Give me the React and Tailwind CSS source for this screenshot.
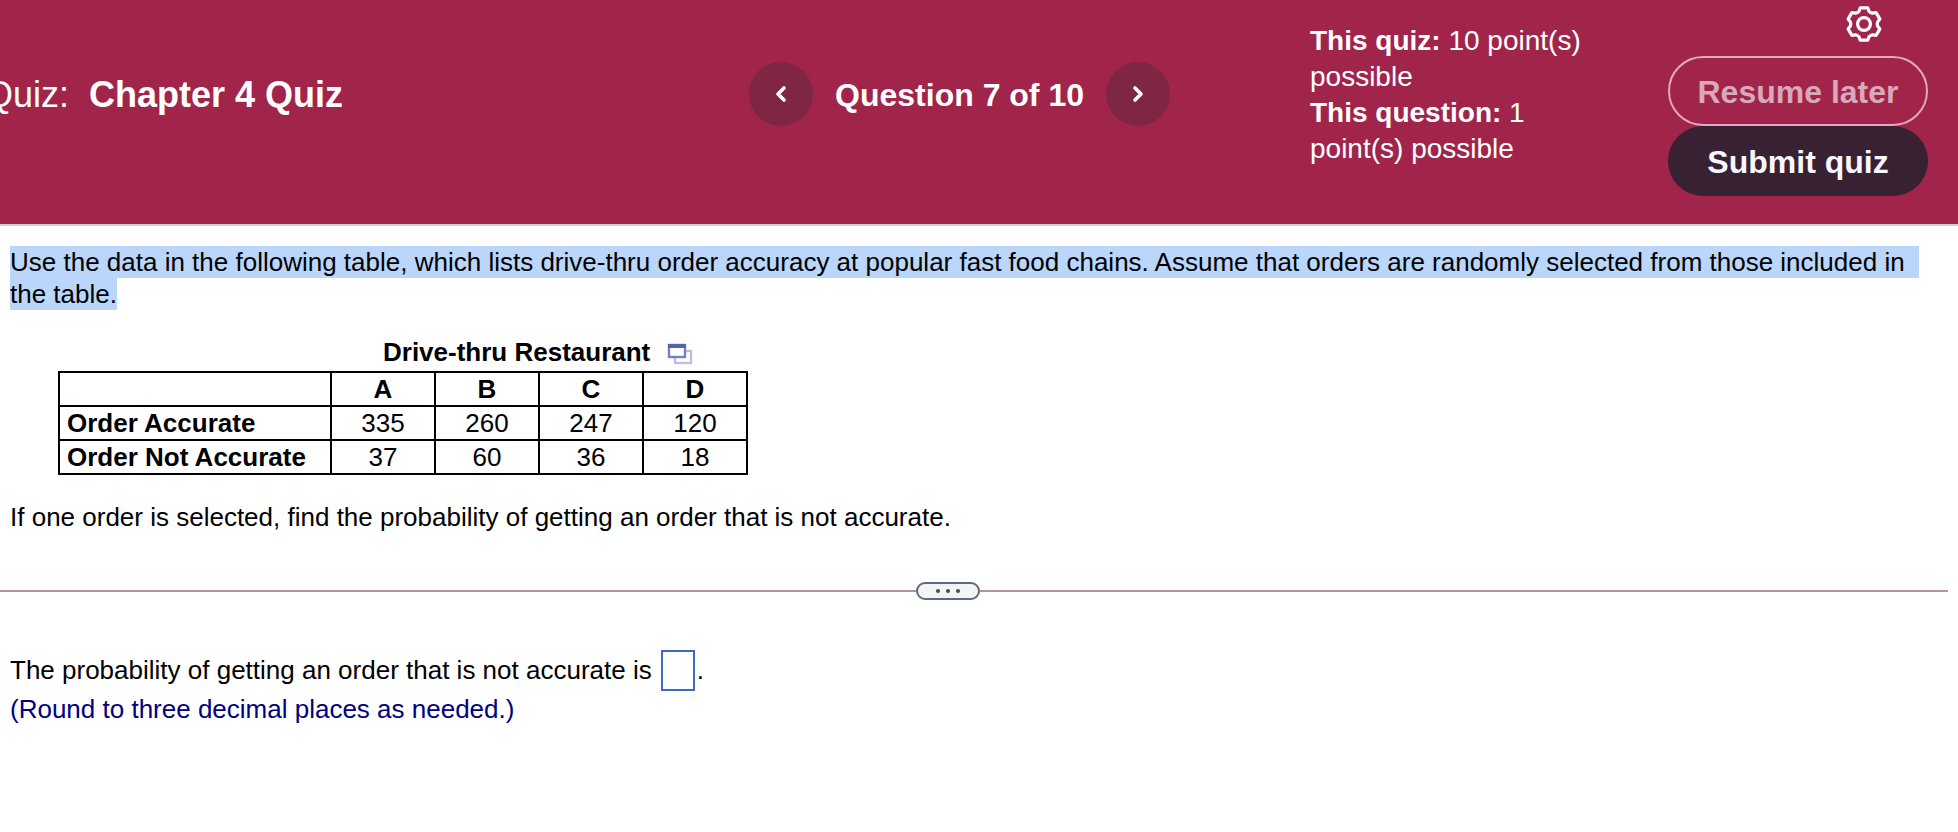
import React, { useState } from 'react';

const COLUMNS = ['A', 'B', 'C', 'D'];

const ROWS = [
    { label: 'Order Accurate', values: [335, 260, 247, 120] },
    { label: 'Order Not Accurate', values: [37, 60, 36, 18] }
];

function Chevron({ d }) {
    return (
        <svg width="12" height="18" viewBox="0 0 12 18" fill="none" stroke="currentColor" strokeWidth="3.6" strokeLinecap="round" strokeLinejoin="round">
            <path d={d} />
        </svg>
    );
}

function GearIcon() {
    return (
        <svg width="36" height="38" viewBox="-18 -19 36 38" fill="none" stroke="currentColor" strokeWidth="3.2" strokeLinejoin="round">
            <path d="M-3.7-16.2H3.7L5-12.8Q6.4-11.2 8.4-10.8L12.1-11.4 15.9-4.9 13.6-2Q12.8 0 13.6 2L15.9 4.9 12.1 11.4 8.4 10.8Q6.4 11.2 5 12.8L3.7 16.2H-3.7L-5 12.8Q-6.4 11.2-8.4 10.8L-12.1 11.4-15.9 4.9-13.6 2Q-12.8 0-13.6-2L-15.9-4.9-12.1-11.4-8.4-10.8Q-6.4-11.2-5-12.8Z" />
            <circle r="6.4" />
        </svg>
    );
}

function PopOutIcon() {
    return (
        <svg width="26" height="22" viewBox="0 0 26 22" fill="none">
            <rect x="8" y="8" width="16" height="12" stroke="#bcc1e0" strokeWidth="2.4" />
            <rect x="2" y="2" width="16" height="12" fill="#fff" stroke="#7580be" strokeWidth="2.4" />
            <rect x="1" y="1" width="18" height="4" fill="#5563ac" />
        </svg>
    );
}

function QuizHeader() {
    const navButton = 'flex size-16 items-center justify-center rounded-full bg-[#7e2643]';

    return (
        <header className="flex h-[226px] overflow-hidden border-b-2 border-[#cfcedd] bg-[#a1254b] text-white">
            <h1 className="-ml-[15px] flex-1 whitespace-pre pt-[73px] text-[36px] leading-[44px]">
                Quiz:{'  '}<strong>Chapter 4 Quiz</strong>
            </h1>
            <nav className="mt-[62px] flex h-16 items-center gap-[22px]">
                <button type="button" aria-label="Previous question" className={navButton}>
                    <Chevron d="M9 3 3 9l6 6" />
                </button>
                <span className="pt-[2px] text-[32px] leading-10 font-bold">Question 7 of 10</span>
                <button type="button" aria-label="Next question" className={navButton}>
                    <Chevron d="M3 3l6 6-6 6" />
                </button>
            </nav>
            <div className="ml-[140px] w-[278px] pt-[23px] text-[28px] leading-9">
                <p><strong>This quiz:</strong> 10 point(s) possible</p>
                <p><strong>This question:</strong> 1 point(s) possible</p>
            </div>
            <div className="mr-[30px] ml-20 flex w-[260px] flex-col">
                <button type="button" aria-label="Settings" className="mt-[5px] mr-[46px] mb-[13px] self-end">
                    <GearIcon />
                </button>
                <button type="button" className="h-[70px] rounded-full border-2 border-[#dfaabd] pt-[2px] text-[32px] leading-10 font-bold text-[#d9a8bb]">
                    Resume later
                </button>
                <button type="button" className="h-[70px] rounded-full bg-[#372132] pt-[2px] text-[32px] leading-10 font-bold text-[#f7f8ff]">
                    Submit quiz
                </button>
            </div>
        </header>
    );
}

function AccuracyTable() {
    const cell = 'h-[34px] border-2 border-black p-0';

    return (
        <div className="mt-6 ml-12 w-[690px]">
            <div className="flex items-center pb-px pl-[325px]">
                <span id="table-title" className="text-[26px] leading-9 font-bold">Drive-thru Restaurant</span>
                <button type="button" aria-label="Open table in new window" className="ml-[17px] pt-1">
                    <PopOutIcon />
                </button>
            </div>
            <table aria-labelledby="table-title" className="w-full table-fixed border-collapse text-center leading-8">
                <thead>
                    <tr>
                        <td className={`${cell} w-[272px]`}></td>
                        {COLUMNS.map(name => (
                            <th key={name} scope="col" className={cell}>{name}</th>
                        ))}
                    </tr>
                </thead>
                <tbody>
                    {ROWS.map(row => (
                        <tr key={row.label}>
                            <th scope="row" className="h-[34px] border-2 border-black py-0 pl-[7px] text-left">{row.label}</th>
                            {row.values.map((value, i) => (
                                <td key={COLUMNS[i]} className={cell}>{value}</td>
                            ))}
                        </tr>
                    ))}
                </tbody>
            </table>
        </div>
    );
}

export default function App() {
    const [answer, setAnswer] = useState('');

    return (
        <div className="min-h-screen bg-white font-['Liberation_Sans',Arial,sans-serif] text-[26px] leading-8 text-black">
            <QuizHeader />

            <main>
                <section className="pt-5 pr-[39px] pl-[10px]">
                    <p>
                        <span className="block bg-[#bad6fb]">
                            Use the data in the following table, which lists drive-thru order accuracy at popular fast food chains. Assume that orders are randomly selected from those included in
                        </span>
                        <span className="inline-block bg-[#bad6fb]">the table.</span>
                    </p>
                    <AccuracyTable />
                    <p className="mt-[26px]">If one order is selected, find the probability of getting an order that is not accurate.</p>
                </section>

                {/* Divider between the question and the answer area */}
                <div className="mt-[49px] mr-[10px] flex items-center">
                    <div className="h-[2px] w-[47%] bg-[#b592a3]" />
                    <button type="button" aria-label="Resize panes" className="flex h-[18px] w-16 items-center justify-center gap-[6px] rounded-full border-2 border-[#5f6b7a] bg-[#f2f4f6]">
                        <span className="size-1 rounded-full bg-[#45484c]" />
                        <span className="size-1 rounded-full bg-[#45484c]" />
                        <span className="size-1 rounded-full bg-[#45484c]" />
                    </button>
                    <div className="h-[2px] flex-1 bg-[#b592a3]" />
                </div>

                <section className="pt-[50px] pl-[10px]">
                    <div className="flex items-center">
                        <label htmlFor="answer" className="pb-[2px]">The probability of getting an order that is not accurate is</label>
                        <input
                            id="answer"
                            type="text"
                            value={answer}
                            onChange={e => setAnswer(e.target.value)}
                            className="mr-[2px] ml-[9px] h-[41px] w-[34px] border-2 border-[#3c69c8] outline-none"
                        />
                        <span className="pb-[2px]">.</span>
                    </div>
                    <p className="mt-[2px] text-[#000080]">(Round to three decimal places as needed.)</p>
                </section>
            </main>
        </div>
    );
}
